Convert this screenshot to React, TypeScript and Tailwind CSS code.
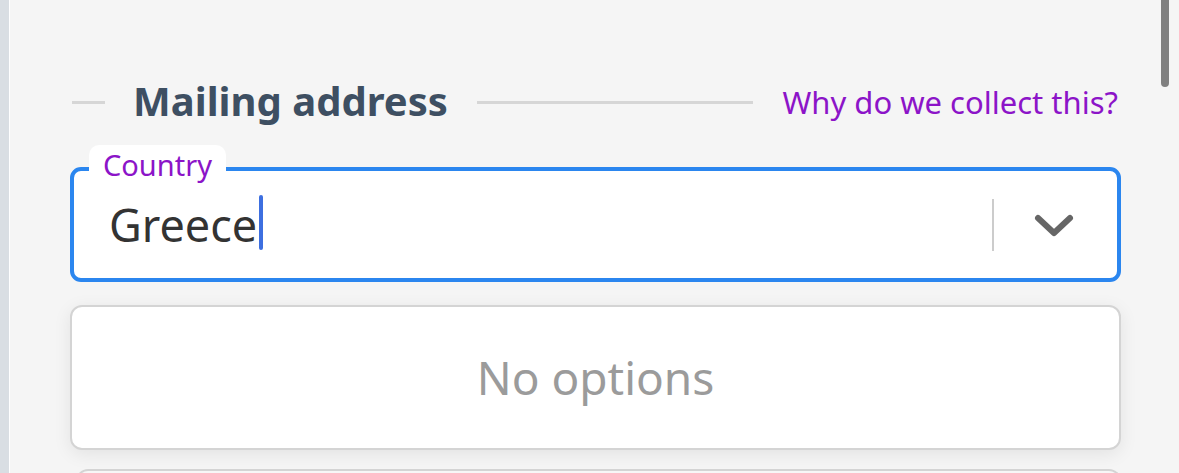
import { useState } from "react";

const font = { fontFamily: '"Noto Sans", "Open Sans", sans-serif' };

function Chevron() {
  return (
    <svg width="44" height="30" viewBox="0 0 44 30" fill="none">
      <path d="M6 7 L22 22 L38 7" stroke="#666666" strokeWidth="6" strokeLinecap="round" strokeLinejoin="round" />
    </svg>
  );
}

export default function App() {
  const [country] = useState("Greece");

  return (
    <div className="w-[1179px] h-[473px] overflow-hidden flex bg-[#f5f5f5] relative" style={font}>
      <div className="w-[10px] shrink-0 bg-[#d9dee3] border-r border-white" />

      <div className="flex-1 pl-[60px] pr-[58px] pt-[79px]">
        {/* section heading */}
        <div className="flex items-center h-[46px]">
          <div className="w-[33px] h-[3px] bg-[#d6d6d6] ml-[2px] shrink-0" />
          <h2 className="ml-[28px] text-[40px] font-bold text-[#3e4f62] leading-none whitespace-nowrap pb-[2px]">
            Mailing address
          </h2>
          <div className="flex-1 h-[3px] bg-[#d6d6d6] mx-[29px]" />
          <a className="text-[31px] text-[#8c14c8] leading-none whitespace-nowrap mr-[3px]">
            Why do we collect this?
          </a>
        </div>

        {/* country select */}
        <div className="relative mt-[42px] h-[115px] bg-white border-4 border-[#2b86ef] rounded-[11px] flex items-center">
          <span className="absolute -top-[26px] left-[15px] h-[38px] px-[14px] bg-white rounded-[10px] flex items-center text-[29px] text-[#8c14c8] leading-none">
            Country
          </span>
          <div className="flex-1 flex items-center pl-[35px]">
            <span className="text-[45px] text-[#333333] leading-none">{country}</span>
            <span className="w-[4px] h-[55px] bg-[#3d6fe0] rounded-full ml-[2px] -mt-[4px]" />
          </div>
          <div className="w-[2px] h-[52px] bg-[#cccccc] mr-[38px]" />
          <div className="mr-[41px] pt-[2px]">
            <Chevron />
          </div>
        </div>

        {/* menu */}
        <div className="mt-[23px] h-[145px] bg-white border-2 border-[#d4d4d4] rounded-[12px] shadow-[0_4px_18px_rgba(0,0,0,0.08)] flex items-center justify-center">
          <span className="text-[46px] text-[#9b9b9b] leading-none pb-[2px]">No options</span>
        </div>

        <div className="mt-[19px] ml-[6px] h-[20px] border-t-2 border-x-2 border-[#d4d4d4] rounded-t-[12px] bg-[#f7f7f7]" />
      </div>

      <div className="absolute right-[10px] top-0 w-[8px] h-[87px] bg-[#808080] rounded-b-full" />
    </div>
  );
}
